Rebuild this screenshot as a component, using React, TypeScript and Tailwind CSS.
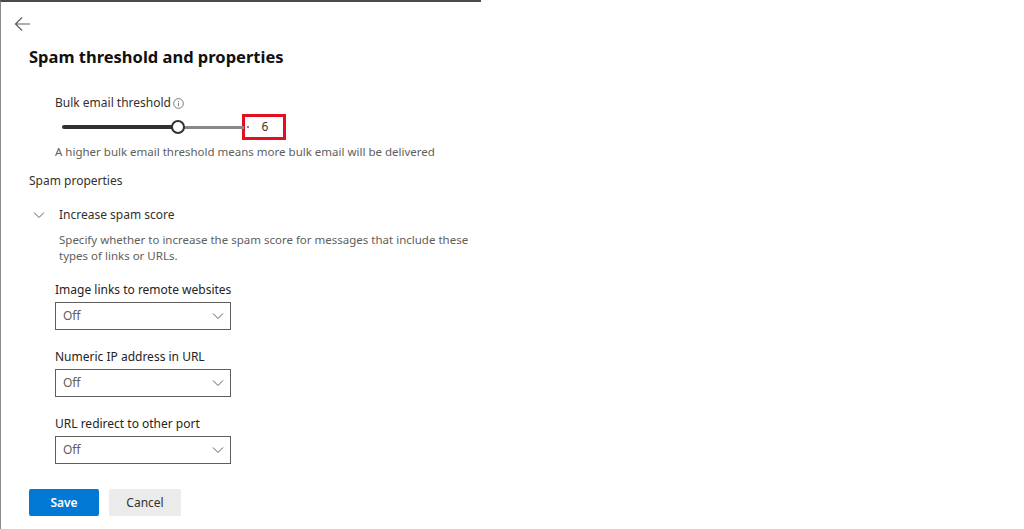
// Spam threshold and properties flyout panel

function Chevron({ className = '' }: { className?: string }) {
  return (
    <svg width="12" height="8" viewBox="0 0 12 8" className={className} fill="none">
      <path d="M1 1.5 L6 6.5 L11 1.5" stroke="#605e5c" strokeWidth="1" />
    </svg>
  )
}

function Dropdown({ label }: { label: string }) {
  return (
    <div className="pl-[54px]">
      <div className="text-[12px] leading-[16px] text-[#252423]">{label}</div>
      <div className="mt-[4px] flex h-[28px] w-[176px] items-center justify-between border border-[#605e5c] pl-[7px] pr-[6px]">
        <span className="text-[12px] text-[#605e5c]">Off</span>
        <Chevron />
      </div>
    </div>
  )
}

export default function App() {
  return (
    <div className="h-[529px] w-[1024px] bg-white font-['Noto_Sans',sans-serif]">
      <div className="h-full w-[481px] border-t-2 border-l border-t-[#4a4a4a] border-l-[#8a8a8a] bg-white">

        {/* Back arrow */}
        <div className="pl-[13px] pt-[14px]">
          <svg width="18" height="16" viewBox="0 0 18 16" fill="none">
            <path d="M8 1.5 L1.5 8 L8 14.5 M1.5 8 H16" stroke="#605e5c" strokeWidth="1.2" />
          </svg>
        </div>

        {/* Title */}
        <h1 className="mt-[13px] pl-[28px] text-[16.5px] leading-[24px] font-bold text-[#111]">
          Spam threshold and properties
        </h1>

        {/* Bulk email threshold */}
        <div className="mt-[26px] pl-[54px]">
          <div className="flex items-center gap-[2px] text-[12px] leading-[16px] text-[#323130]">
            Bulk email threshold
            <svg width="11" height="11" viewBox="0 0 12 12" fill="none">
              <circle cx="6" cy="6" r="5.3" stroke="#605e5c" strokeWidth="0.9" />
              <path d="M6 5.2 V9" stroke="#605e5c" strokeWidth="0.9" />
              <circle cx="6" cy="3.5" r="0.6" fill="#605e5c" />
            </svg>
          </div>

          <div className="mt-[3px] flex h-[26px] items-center">
            <div className="relative ml-[7px] flex h-[14px] w-[182px] items-center">
              <div className="h-[4px] w-[116px] rounded-l-full bg-[#323130]" />
              <div className="h-[3px] flex-1 bg-[#8a8886]" />
              <div className="absolute left-[109px] top-0 h-[14px] w-[14px] rounded-full border-2 border-[#323130] bg-white" />
            </div>
            <div className="ml-[3px] h-[2px] w-[2px] bg-[#8a8886]" />
            <div className="ml-[-7px] flex h-[26px] w-[44px] items-center justify-center border-[3px] border-[#e3101e] pl-[2px] text-[12px] text-[#323130]">
              6
            </div>
          </div>

          <div className="mt-[4px] text-[11.5px] leading-[16px] text-[#605e5c]">
            A higher bulk email threshold means more bulk email will be delivered
          </div>
        </div>

        {/* Spam properties */}
        <div className="mt-[13px] pl-[28px] text-[12px] leading-[16px] text-[#323130]">Spam properties</div>

        <div className="mt-[18px] flex items-center pl-[32px]">
          <Chevron />
          <span className="ml-[14px] text-[12px] leading-[16px] text-[#323130]">Increase spam score</span>
        </div>

        <div className="mt-[9px] pl-[58px] pr-[2px] text-[11.5px] leading-[16px] text-[#605e5c]">
          Specify whether to increase the spam score for messages that include these types of links or URLs.
        </div>

        <div className="mt-[18px] flex flex-col gap-[19px]">
          <Dropdown label="Image links to remote websites" />
          <Dropdown label="Numeric IP address in URL" />
          <Dropdown label="URL redirect to other port" />
        </div>

        {/* Actions */}
        <div className="mt-[25px] flex gap-[10px] pl-[28px]">
          <button className="h-[27px] w-[70px] rounded-[2px] bg-[#0078d4] text-[12px] font-semibold text-white">Save</button>
          <button className="h-[27px] w-[72px] rounded-[2px] bg-[#ebebeb] text-[12px] text-[#323130]">Cancel</button>
        </div>
      </div>
    </div>
  )
}
